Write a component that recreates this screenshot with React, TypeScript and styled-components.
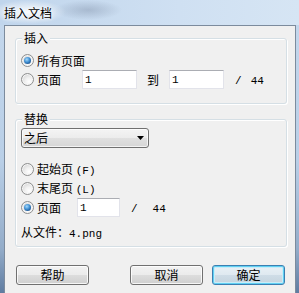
import styled, { createGlobalStyle, css } from "styled-components";

const GlobalStyle = createGlobalStyle`
  html, body {
    margin: 0;
    padding: 0;
    background: #f0f0f0;
  }
`;

const Window = styled.div`
  width: 299px;
  height: 293px;
  overflow: hidden;
  display: flex;
  flex-direction: column;
  font-family: "Noto Sans CJK SC", "Liberation Sans", sans-serif;
  font-size: 12px;
  color: #000;
  background: linear-gradient(to bottom, #c5d8ed 0%, #b9cfe7 55%, #93acc9 85%, #5f7ca1 100%);
`;

const TitleBar = styled.div`
  flex: none;
  height: 25px;
  display: flex;
  align-items: center;
  padding-left: 4px;
  background:
    radial-gradient(ellipse 38px 12px at 28px 12px, rgba(255, 255, 255, 0.9), rgba(255, 255, 255, 0)),
    radial-gradient(ellipse 34px 10px at 88px 10px, rgba(110, 125, 150, 0.35), rgba(110, 125, 150, 0)),
    linear-gradient(to right, #c0d5ec, #cfe0f2 60%, #d6e5f4);
`;

const Title = styled.span`
  line-height: 14px;
  text-shadow: 0 0 6px #fff, 0 0 3px #fff;
`;

const Client = styled.div`
  flex: 1;
  margin: 0 3px 0 4px;
  border: 1px solid #7c8b9d;
  border-bottom: none;
  background: #f0f0f0;
  display: flex;
  flex-direction: column;
`;

const Group = styled.fieldset<{ $mt: number }>`
  margin: ${(p) => p.$mt}px 8px 0 10px;
  padding: 0;
  min-width: 0;
  border: 1px solid #d5dfe5;
  border-radius: 3px;
  box-shadow: 1px 1px 0 #fff, inset 1px 1px 0 #fff;
`;

const Legend = styled.legend`
  margin-left: 6px;
  padding: 0 2px;
  line-height: 14px;
  background: #f0f0f0;
`;

const GroupBody = styled.div<{ $pt: number; $pb: number }>`
  display: flex;
  flex-direction: column;
  align-items: flex-start;
  padding: ${(p) => p.$pt}px 0 ${(p) => p.$pb}px 5px;
`;

const OptionRow = styled.div`
  display: flex;
  align-items: center;
  height: 19px;
`;

const Radio = styled.span<{ $checked?: boolean }>`
  position: relative;
  flex: none;
  width: 13px;
  height: 13px;
  box-sizing: border-box;
  border-radius: 50%;
  border: 1px solid #8e8f8f;
  background: radial-gradient(circle at 65% 70%, #ffffff 0, #f2f2f2 35%, #c9c9c9 100%);
  box-shadow: inset 0 0 0 1px #f6f6f6;

  ${(p) =>
    p.$checked &&
    css`
      &::after {
        content: "";
        position: absolute;
        left: 2px;
        top: 2px;
        width: 7px;
        height: 7px;
        border-radius: 50%;
        background: radial-gradient(circle at 40% 35%, #a6dafc 0, #3f8fd2 45%, #1b4f8a 80%, #123a6a 100%);
      }
    `}
`;

const OptionText = styled.span<{ $w?: number }>`
  flex: none;
  margin-left: 3px;
  line-height: 14px;
  white-space: pre;
  ${(p) => p.$w && css`width: ${p.$w}px;`}
`;

const Latin = styled.span`
  font-family: "Liberation Mono", monospace;
  font-size: 11px;
`;

const Word = styled.span<{ $ml: number }>`
  flex: none;
  margin-left: ${(p) => p.$ml}px;
  line-height: 14px;
`;

const NumInput = styled.input<{ $w: number; $ml?: number }>`
  flex: none;
  width: ${(p) => p.$w}px;
  height: 19px;
  margin: 0 0 0 ${(p) => p.$ml ?? 0}px;
  box-sizing: border-box;
  padding: 0 0 0 2px;
  background: #fff;
  border: 1px solid #e2e3ea;
  border-top-color: #abadb3;
  border-radius: 0;
  font-family: "Liberation Mono", monospace;
  font-size: 11px;
  color: #000;
  outline: none;
`;

const Combo = styled.div`
  display: flex;
  align-items: center;
  justify-content: space-between;
  width: 128px;
  height: 20px;
  box-sizing: border-box;
  margin-bottom: 12px;
  padding: 0 4px 0 2px;
  border: 1px solid #707070;
  border-radius: 3px;
  background: linear-gradient(to bottom, #f4f4f4 0%, #ececec 50%, #e0e0e0 50%, #d6d6d6 100%);
  box-shadow: inset 0 0 0 1px rgba(255, 255, 255, 0.7);
  line-height: 14px;
`;

const FileLine = styled.div`
  margin-top: 8px;
  line-height: 14px;
`;

const ButtonRow = styled.div`
  display: flex;
  margin-top: 18px;
  padding: 0 10px 0 11px;
`;

const Button = styled.button<{ $default?: boolean; $ml?: string }>`
  width: 73px;
  height: 20px;
  box-sizing: border-box;
  padding: 0;
  margin-left: ${(p) => p.$ml ?? "0"};
  font-family: inherit;
  font-size: 12px;
  line-height: 14px;
  color: #000;
  border: 1px solid #707070;
  border-radius: 3px;
  background: linear-gradient(to bottom, #f2f2f2 0%, #ebebeb 50%, #dddddd 50%, #cfcfcf 100%);
  box-shadow: inset 0 0 0 1px rgba(255, 255, 255, 0.8);

  ${(p) =>
    p.$default &&
    css`
      border-color: #3c7fb1;
      box-shadow: inset 0 0 0 1px #5fd0f3, inset 0 0 0 2px #c9ecf8;
      background: linear-gradient(to bottom, #e9f1f6 0%, #dfe9f0 50%, #cfdde7 50%, #c5d4de 100%);
    `}
`;

export default function App() {
  return (
    <>
      <GlobalStyle />
      <Window>
        <TitleBar>
          <Title>插入文档</Title>
        </TitleBar>
        <Client>
          <Group $mt={5}>
            <Legend>插入</Legend>
            <GroupBody $pt={6} $pb={14}>
              <OptionRow>
                <Radio $checked />
                <OptionText>所有页面</OptionText>
              </OptionRow>
              <OptionRow>
                <Radio />
                <OptionText $w={45}>页面</OptionText>
                <NumInput $w={55} defaultValue="1" readOnly />
                <Word $ml={10}>到</Word>
                <NumInput $w={55} $ml={10} defaultValue="1" readOnly />
                <Word $ml={11}>
                  <Latin>/</Latin>
                </Word>
                <Word $ml={9}>
                  <Latin>44</Latin>
                </Word>
              </OptionRow>
            </GroupBody>
          </Group>

          <Group $mt={8}>
            <Legend>替换</Legend>
            <GroupBody $pt={2} $pb={5}>
              <Combo>
                <span>之后</span>
                <svg width="7" height="4" viewBox="0 0 7 4">
                  <path d="M0 0h7L3.5 4z" fill="#000" />
                </svg>
              </Combo>
              <OptionRow>
                <Radio />
                <OptionText>
                  起始页 <Latin>(F)</Latin>
                </OptionText>
              </OptionRow>
              <OptionRow>
                <Radio />
                <OptionText>
                  末尾页 <Latin>(L)</Latin>
                </OptionText>
              </OptionRow>
              <OptionRow>
                <Radio $checked />
                <OptionText $w={40}>页面</OptionText>
                <NumInput $w={43} defaultValue="1" readOnly />
                <Word $ml={11}>
                  <Latin>/</Latin>
                </Word>
                <Word $ml={15}>
                  <Latin>44</Latin>
                </Word>
              </OptionRow>
              <FileLine>
                从文件：<Latin>4.png</Latin>
              </FileLine>
            </GroupBody>
          </Group>

          <ButtonRow>
            <Button>帮助</Button>
            <Button $ml="auto">取消</Button>
            <Button $ml="9px" $default>
              确定
            </Button>
          </ButtonRow>
        </Client>
      </Window>
    </>
  );
}
